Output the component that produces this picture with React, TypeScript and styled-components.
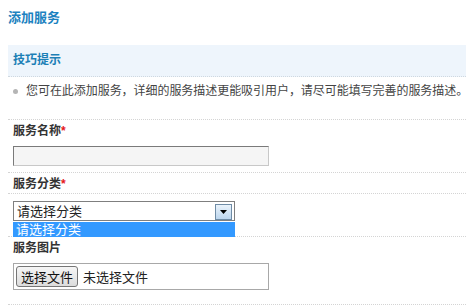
import { createGlobalStyle, styled } from 'styled-components';

const GlobalStyle = createGlobalStyle`
  body {
    margin: 0;
    padding: 0;
    background: #fff;
    font-family: 'Liberation Sans', 'Noto Sans CJK SC', sans-serif;
    font-size: 12px;
    color: #333;
  }
`;

const Page = styled.div`
  padding-left: 8px;
  width: 458px;
  overflow: hidden;
`

const Title = styled.h2`
  margin: 0 0 19px;
  padding-top: 10px;
  font-size: 13px;
  line-height: 16px;
  font-weight: bold;
  color: #1c82c0;
`

const TipHead = styled.div`
  height: 31px;
  line-height: 31px;
  padding-left: 5px;
  background: #eef5fc;
  border-bottom: 1px dotted #cfd8e0;
  font-weight: bold;
  color: #1c7fb6;
`

const TipText = styled.div`
  display: flex;
  align-items: center;
  gap: 8px;
  padding: 6px 0 20px 5px;
  line-height: 16px;
  color: #444;
  white-space: nowrap;
  letter-spacing: -0.05px;
  border-bottom: 1px dotted #d4d4d4;
`

const Dot = styled.span`
  width: 5px;
  height: 5px;
  border-radius: 50%;
  background: #b5b5b5;
  flex-shrink: 0;
`

const Row = styled.div<{ $pb: number }>`
  position: relative;
  padding-left: 5px;
  padding-bottom: ${p => p.$pb}px;
  border-bottom: 1px dotted #d4d4d4;
`

const Label = styled.div<{ $line?: boolean; $pt?: number }>`
  margin-left: -5px;
  padding: ${p => p.$pt ?? 3}px 0 ${p => (p.$line ? 1 : 0)}px 5px;
  line-height: 16px;
  font-weight: bold;
  color: #333;
  border-bottom: ${p => (p.$line ? '1px dotted #d4d4d4' : 'none')};
`

const Star = styled.span`
  color: #e4161e;
`

const TextInput = styled.input`
  display: block;
  box-sizing: border-box;
  width: 256px;
  height: 20px;
  margin: 7px 0 0;
  padding: 0 3px;
  background: #f5f5f5;
  border: 1px solid;
  border-color: #7a7a7a #c8c8c8 #c8c8c8 #7a7a7a;
  outline: none;
`

const SelectBox = styled.div`
  box-sizing: border-box;
  width: 222px;
  height: 20px;
  margin-top: 7px;
  display: flex;
  align-items: center;
  justify-content: space-between;
  padding: 1px 2px 0 3px;
  border: 1px solid #7f7f7f;
  background: #fff;
  color: #222;
  font-size: 13px;
  line-height: 16px;
`

const ArrowBtn = styled.span`
  box-sizing: border-box;
  width: 17px;
  height: 16px;
  display: flex;
  align-items: center;
  justify-content: center;
  border: 1px solid #6f8ca6;
  background: linear-gradient(#eaf3fb, #bcd6ee);
`

const Options = styled.div`
  position: absolute;
  left: 5px;
  top: 49px;
  box-sizing: border-box;
  width: 222px;
  height: 15px;
  padding-left: 3px;
  background: #3399ff;
  color: #fff;
  font-size: 13px;
  line-height: 15px;
`

const FileBox = styled.div`
  box-sizing: border-box;
  width: 256px;
  height: 27px;
  margin-top: 7px;
  display: flex;
  align-items: center;
  gap: 5px;
  padding-left: 2px;
  border: 1px solid #a8a8a8;
  background: #fff;
  font-size: 13px;
  color: #222;
`

const FileBtn = styled.span`
  box-sizing: border-box;
  height: 21px;
  padding: 0 4px;
  display: flex;
  align-items: center;
  border: 1px solid #767676;
  border-radius: 3px;
  background: linear-gradient(#f6f6f6, #dcdcdc);
  font-size: 13px;
  color: #111;
`

function App() {
  return (
    <Page>
      <GlobalStyle />
      <Title>添加服务</Title>

      <TipHead>技巧提示</TipHead>
      <TipText>
        <Dot />
        您可在此添加服务，详细的服务描述更能吸引用户，请尽可能填写完善的服务描述。
      </TipText>

      <Row $pb={6}>
        <Label>服务名称<Star>*</Star></Label>
        <TextInput type="text" />
      </Row>

      <Row $pb={15}>
        <Label $line>服务分类<Star>*</Star></Label>
        <SelectBox>
          <span>请选择分类</span>
          <ArrowBtn>
            <svg width="7" height="4" viewBox="0 0 7 4">
              <path d="M0 0h7L3.5 4z" fill="#000" />
            </svg>
          </ArrowBtn>
        </SelectBox>
        <Options>请选择分类</Options>
      </Row>

      <Row $pb={14}>
        <Label>服务图片</Label>
        <FileBox>
          <FileBtn>选择文件</FileBtn>
          <span>未选择文件</span>
        </FileBox>
      </Row>
    </Page>
  );
}

export default App
